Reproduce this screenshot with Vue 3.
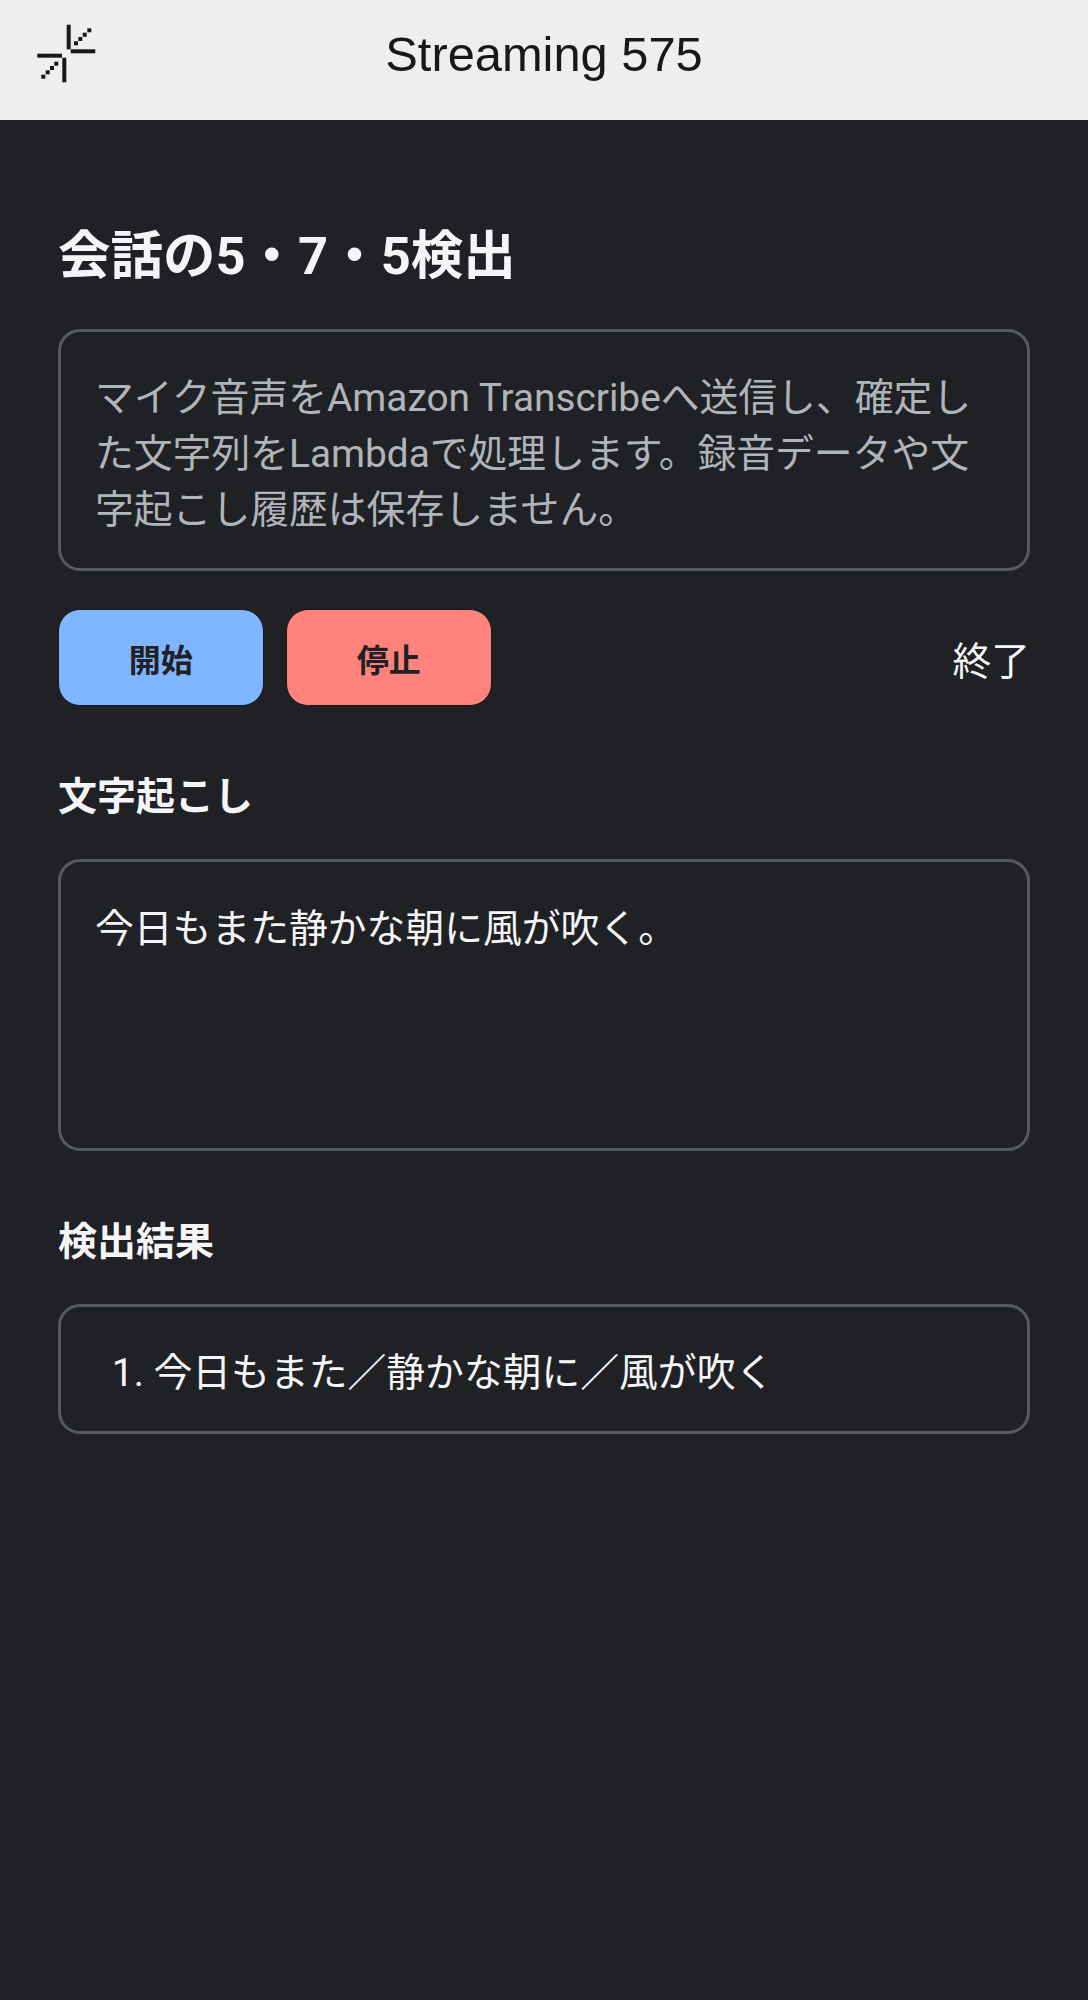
<script setup>
const dots1 = [[89.3,30.3],[84.7,34.7],[80.3,39],[76,43.3]]
const dots2 = [[56.3,63.7],[52,68],[47.7,72.3],[43.3,76.7]]
const results = ['今日もまた／静かな朝に／風が吹く']
</script>

<template>
  <div class="page">
    <header class="bar">
      <svg class="logo" viewBox="0 0 100 100" aria-hidden="true">
        <rect x="66.7" y="24.7" width="4" height="24.6" />
        <rect x="70.7" y="49.3" width="24.6" height="4" />
        <rect x="37.3" y="53.7" width="24.7" height="4" />
        <rect x="62.3" y="57.7" width="4" height="24.6" />
        <rect v-for="(d, i) in [...dots1, ...dots2]" :key="i" :x="d[0] - 2" :y="d[1] - 2" width="4" height="4" />
      </svg>
      <div class="brand">Streaming 575</div>
      <div></div>
    </header>
    <main class="main">
      <h1 class="title">会話の5・7・5検出</h1>
      <section class="card desc">マイク音声をAmazon Transcribeへ送信し、確定した文字列をLambdaで処理します。録音データや文字起こし履歴は保存しません。</section>
      <div class="actions">
        <button class="btn start">開始</button>
        <button class="btn stop">停止</button>
        <button class="exit">終了</button>
      </div>
      <h2 class="heading">文字起こし</h2>
      <section class="card transcript">今日もまた静かな朝に風が吹く。</section>
      <h2 class="heading second">検出結果</h2>
      <section class="card result">
        <ol class="list">
          <li v-for="r in results" :key="r">{{ r }}</li>
        </ol>
      </section>
    </main>
  </div>
</template>

<style>
html, body { margin: 0; background: #1f2125; }
</style>

<style scoped>
.page {
  min-height: 2000px;
  background: #1f2125;
  color: #f5f5f7;
  font-family: Roboto, "Noto Sans CJK JP", sans-serif;
  box-sizing: border-box;
}
.bar {
  height: 120px;
  background: #eeeeee;
  display: grid;
  grid-template-columns: 1fr auto 1fr;
  align-items: center;
  box-sizing: border-box;
}
.logo { width: 100px; height: 100px; display: block; fill: #17181a; align-self: start; }
.brand {
  font-family: "Liberation Sans", Arial, sans-serif;
  font-size: 48.8px;
  color: #17181a;
  line-height: 56px;
  margin-bottom: 12px;
}
.main { padding: 103px 58px 0; }
.title { margin: 0 0 40px; font-size: 52.5px; line-height: 66px; font-weight: 700; }
.card {
  border: 3px solid #56595d;
  border-radius: 22px;
  box-sizing: border-box;
  font-size: 38.8px;
  line-height: 56px;
  padding: 38px 34px 29.5px;
}
.desc { color: #b1b4b8; }
.actions { display: flex; align-items: center; gap: 22.5px; margin-top: 38.5px; }
.btn {
  width: 205.5px;
  height: 97px;
  border: 1px solid #17181a;
  border-radius: 22px;
  font: 700 32px Roboto, "Noto Sans CJK JP", sans-serif;
  color: #1f2125;
  padding: 0;
}
.start { background: #7fb6ff; }
.stop { background: #ff827d; }
.exit {
  margin-left: auto;
  background: none;
  border: none;
  padding: 0;
  color: #f5f5f7;
  font: 400 38.8px Roboto, "Noto Sans CJK JP", sans-serif;
}
.heading { margin: 63.5px 0 34.5px; font-size: 39px; line-height: 55px; font-weight: 700; }
.heading.second { margin: 64px 0 34.5px; }
.transcript { height: 291.5px; padding-top: 39px; }
.result { padding-bottom: 29.5px; }
.list { margin: 0; padding: 0 0 0 58.5px; }
</style>
